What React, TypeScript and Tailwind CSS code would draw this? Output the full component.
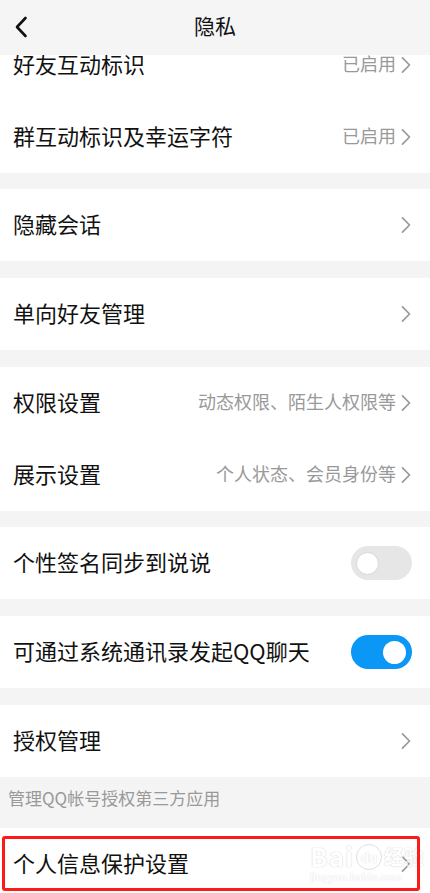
import React from "react";

const Chevron = () => (
  <svg width="10" height="18" viewBox="0 0 10 18" fill="none" className="shrink-0">
    <path d="M1.5 1.8 L8.5 9 L1.5 16.2" stroke="#9a9a9a" strokeWidth="1.7" strokeLinecap="round" strokeLinejoin="round" />
  </svg>
);

const Row = ({ label, value, chevron = true, children }: { label: string; value?: string; chevron?: boolean; children?: React.ReactNode }) => (
  <div className="flex h-[72px] items-center justify-between bg-white pl-[13px] pr-[19px]">
    <span className="pb-[5px] text-[22px] leading-[30px] text-[#111]">{label}</span>
    <div className="flex items-center gap-[5px]">
      {value && <span className="pb-[4px] text-[18px] leading-[24px] text-[#999]">{value}</span>}
      {chevron && <Chevron />}
      {children}
    </div>
  </div>
);

const Toggle = ({ on }: { on: boolean }) => (
  <div
    className={
      on
        ? "mr-[-1px] flex h-[34px] w-[61px] items-center justify-end rounded-full bg-[#0a97f5] pr-[6px]"
        : "mr-[-1px] flex h-[34px] w-[61px] items-center justify-start rounded-full bg-[#e6e6e6] pl-[5px]"
    }
  >
    <div className={on ? "h-[23px] w-[23px] rounded-full bg-white" : "h-[23px] w-[23px] rounded-full border border-[#d6d6d6] bg-white"} />
  </div>
);

export default function App() {
  return (
    <div className="flex h-[893px] w-[430px] flex-col overflow-hidden bg-[#f4f4f4] font-['Noto_Sans_CJK_SC','Noto_Sans',sans-serif]">
      <div className="grid h-[55px] shrink-0 grid-cols-[1fr_auto_1fr] items-center bg-[#f5f5f5]">
        <div className="pl-[14px] pb-[2px]">
          <svg width="14" height="22" viewBox="0 0 14 22" fill="none">
            <path d="M11.5 2 L3 11 L11.5 20" stroke="#111" strokeWidth="2.6" strokeLinecap="round" strokeLinejoin="round" />
          </svg>
        </div>
        <span className="pb-[5px] text-[21px] leading-[28px] text-[#111]">隐私</span>
        <div />
      </div>
      <div className="flex-1 overflow-hidden">
        <div className="mt-[-26px] flex flex-col">
          <Row label="好友互动标识" value="已启用" />
          <Row label="群互动标识及幸运字符" value="已启用" />
          <div className="h-[16px]" />
          <Row label="隐藏会话" />
          <div className="h-[17px]" />
          <Row label="单向好友管理" />
          <div className="h-[17px]" />
          <Row label="权限设置" value="动态权限、陌生人权限等" />
          <Row label="展示设置" value="个人状态、会员身份等" />
          <div className="h-[16px]" />
          <Row label="个性签名同步到说说" chevron={false}>
            <Toggle on={false} />
          </Row>
          <div className="h-[17px]" />
          <Row label="可通过系统通讯录发起QQ聊天" chevron={false}>
            <Toggle on={true} />
          </Row>
          <div className="h-[17px]" />
          <Row label="授权管理" />
          <div className="h-[51px] px-[8px] pt-[9px]">
            <span className="text-[17px] leading-[24px] text-[#999]">管理QQ帐号授权第三方应用</span>
          </div>
          <div className="relative">
            <Row label="个人信息保护设置" />
            <div className="pointer-events-none absolute left-[310px] top-[14px] flex flex-col items-start opacity-60">
              <div className="flex items-end gap-[2px]">
                <span className="text-[26px] font-bold leading-[28px] tracking-[1px] text-white [text-shadow:0_0_1px_#bbb,0_0_1px_#bbb]">Bai</span>
                <span className="flex h-[26px] w-[26px] items-center justify-center rounded-full border border-[#ccc] text-[13px] font-bold leading-none text-white [text-shadow:0_0_1px_#aaa]">du</span>
                <span className="text-[20px] font-bold leading-[26px] text-white [text-shadow:0_0_1px_#bbb,0_0_1px_#bbb]">经验</span>
              </div>
              <span className="text-[10px] font-bold leading-[14px] text-white [text-shadow:0_0_1px_#bbb]">jingyan.baidu.com</span>
            </div>
            <div className="pointer-events-none absolute left-[2px] top-[8px] h-[55px] w-[418px] rounded-[3px] border-[3px] border-[#ff1a1a]" />
          </div>
        </div>
      </div>
    </div>
  );
}
